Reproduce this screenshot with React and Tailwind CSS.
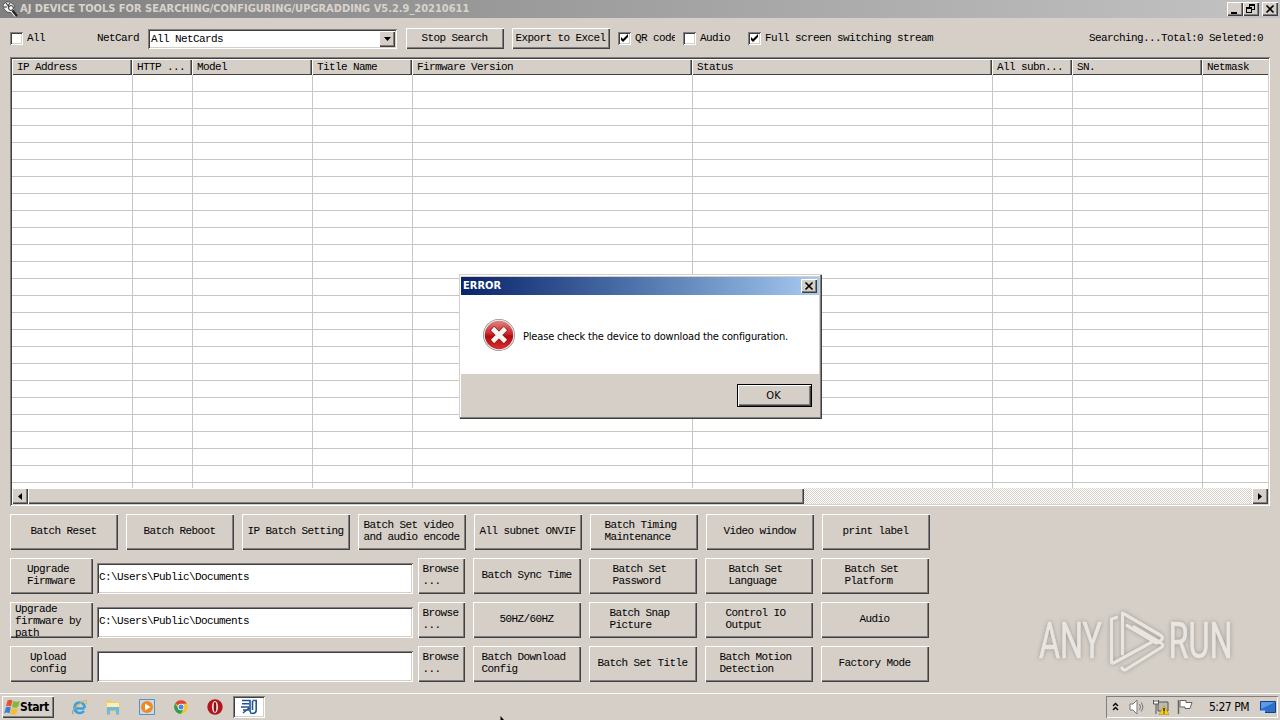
import React from "react";

const RAISED =
  "bg-[#d5cfc8] shadow-[inset_1px_1px_0_#ffffff,inset_-1px_-1px_0_#404040,inset_-2px_-2px_0_#808080]";
const SUNKEN =
  "bg-white shadow-[inset_1px_1px_0_#808080,inset_-1px_-1px_0_#ffffff,inset_2px_2px_0_#404040,inset_-2px_-2px_0_#d5cfc8]";
const MONO =
  "font-['Liberation_Mono',monospace] text-[11px] leading-[12px] tracking-[-0.6px] text-black";
const TAHOMA = "font-['DejaVu_Sans_Condensed','DejaVu_Sans',sans-serif]";

const COLUMNS = [
  { label: "IP Address", w: "w-[120px]" },
  { label: "HTTP ...", w: "w-[60px]" },
  { label: "Model", w: "w-[120px]" },
  { label: "Title Name", w: "w-[100px]" },
  { label: "Firmware Version", w: "w-[280px]" },
  { label: "Status", w: "w-[300px]" },
  { label: "All subn...", w: "w-[80px]" },
  { label: "SN.", w: "w-[130px]" },
  { label: "Netmask", w: "w-[120px]" },
];

const TOP_ACTIONS = [
  ["Batch Reset"],
  ["Batch Reboot"],
  ["IP Batch Setting"],
  ["Batch Set video ", "and audio encode"],
  ["All subnet ONVIF"],
  ["Batch Timing ", "Maintenance"],
  ["Video window"],
  ["print label"],
];

const PATH_ROWS = [
  {
    action: ["Upgrade ", "Firmware"],
    path: "C:\\Users\\Public\\Documents",
    buttons: [["Batch Sync Time"], ["Batch Set ", "Password"], ["Batch Set ", "Language"], ["Batch Set ", "Platform"]],
  },
  {
    action: ["Upgrade ", "firmware by ", "path"],
    path: "C:\\Users\\Public\\Documents",
    buttons: [["50HZ/60HZ"], ["Batch Snap ", "Picture"], ["Control IO ", "Output"], ["Audio"]],
  },
  {
    action: ["Upload ", "config"],
    path: "",
    buttons: [["Batch Download ", "Config"], ["Batch Set Title"], ["Batch Motion ", "Detection"], ["Factory Mode"]],
  },
];

function PushButton({ lines, className = "w-[108px] h-9", pad = "pb-[2px] pr-[1px]" }) {
  return (
    <button className={`${RAISED} ${MONO} ${className} flex shrink-0 justify-center overflow-hidden p-0`}>
      <span className={`flex h-full flex-col justify-center whitespace-pre text-left ${pad}`}>
        {lines.map((line) => (
          <span key={line} className="block h-3 shrink-0">
            {line}
          </span>
        ))}
      </span>
    </button>
  );
}

function CheckBox({ label, checked, className }) {
  return (
    <label className={`flex h-[13px] shrink-0 items-start gap-[4px] overflow-hidden ${className}`}>
      <span className={`flex size-[13px] shrink-0 ${SUNKEN}`}>
        {checked && (
          <svg viewBox="0 0 13 13" className="size-[13px]">
            <path d="M3 5v3l2 2 5-5V2L5 7Z" fill="#000" />
          </svg>
        )}
      </span>
      <span className={`${MONO} whitespace-pre`}>{label}</span>
    </label>
  );
}

function CaptionButton({ children, className = "w-4" }) {
  return (
    <button className={`${RAISED} flex h-[14px] shrink-0 items-center justify-center p-0 ${className}`}>
      <svg viewBox="0 0 16 14" className="h-[14px] w-4" fill="none" stroke="#000" shapeRendering="crispEdges">
        {children}
      </svg>
    </button>
  );
}

function TitleBar() {
  return (
    <header className="flex h-[18px] shrink-0 items-center bg-linear-to-r from-[#808080] to-[#c3c3c3] pl-[2px] pr-[2px]">
      <svg viewBox="0 0 16 16" className="mr-[2px] size-4">
        <path d="M1 4 4 1l4 0 4 3 1 4-3 4-5-1-3-3Z" fill="#f2f2ee" stroke="#444" strokeWidth=".8" />
        <path d="M4 2l3 4M8 2 6 5M2 6h3" stroke="#333" strokeWidth="1.1" />
        <circle cx="9" cy="7" r="2.4" fill="#fff" stroke="#222" />
        <path d="m10.500 9.500 4.500 5.500" stroke="#222" strokeWidth="2" />
        <path d="m9 10.500 4 5" stroke="#fff" />
      </svg>
      <h1 className={`${TAHOMA} flex-1 whitespace-pre text-[11px] font-bold leading-[18px] tracking-[-0.01px] text-[#d8d3cc]`}>
        AJ DEVICE TOOLS FOR SEARCHING/CONFIGURING/UPGRADDING V5.2.9_20210611
      </h1>
      <CaptionButton>
        <path d="M4 10.500h6" strokeWidth="2" />
      </CaptionButton>
      <CaptionButton>
        <path d="M6.500 3v3M11.500 3v5M9 7.500h3" strokeWidth="1" />
        <path d="M6 3h6M3 6h6" strokeWidth="2" />
        <path d="M3.500 6v5M8.500 6v5M3 10.500h6" />
      </CaptionButton>
      <CaptionButton className="ml-[3px] w-4">
        <path d="m4.500 3.500 7 7m0-7-7 7" strokeWidth="1.7" shapeRendering="auto" />
      </CaptionButton>
    </header>
  );
}

function Toolbar() {
  return (
    <div className="flex h-[39px] shrink-0 items-center pl-[10px] pt-[2px]">
      <CheckBox label="All" className="w-[87px]" />
      <span className={`${MONO} mb-px w-[51px]`}>NetCard</span>
      <div className={`${SUNKEN} flex h-[20px] w-[249px] items-center justify-between p-[2px]`}>
        <span className={`${MONO} pl-[1px] pt-[1px]`}>All NetCards</span>
        <span className={`${RAISED} flex h-4 w-4 items-center justify-center`}>
          <svg viewBox="0 0 7 4" className="h-1 w-[7px]">
            <path d="M0 0h7L3.500 4Z" />
          </svg>
        </span>
      </div>
      <PushButton lines={["Stop Search"]} className="ml-[9px] h-[21px] w-[98px]" pad="pb-[1px] pr-[1px]" />
      <PushButton lines={["Export to Excel"]} className="ml-2 mr-2 h-[21px] w-[98px]" pad="pb-[1px] pr-[1px]" />
      <CheckBox label="QR code" checked className="mr-2 w-[57px]" />
      <CheckBox label="Audio" className="w-[65px]" />
      <CheckBox label="Full screen switching stream" checked className="w-[200px]" />
      <span className={`${MONO} mb-px ml-auto mr-[17px] whitespace-pre`}>Searching...Total:0 Seleted:0</span>
    </div>
  );
}

function DeviceTable() {
  return (
    <section className={`${SUNKEN} mx-[10px] flex h-[449px] shrink-0 flex-col p-[2px]`}>
      <div className="flex h-4 w-[1256px] shrink-0 overflow-hidden">
        {COLUMNS.map((c) => (
          <div
            key={c.label}
            className={`${c.w} ${MONO} h-4 shrink-0 whitespace-pre bg-[#d5cfc8] pl-[5px] pt-[2px] shadow-[inset_1px_1px_0_#ffffff,inset_-1px_-1px_0_#404040,inset_-2px_0_0_#808080]`}
          >
            {c.label}
          </div>
        ))}
      </div>
      <div className="h-[413px] w-[1256px] shrink-0 overflow-hidden">
        {Array.from({ length: 25 }, (_, r) => (
          <div key={r} className="flex h-[17px] border-b border-[#c9c6c2]">
            {COLUMNS.map((c, i) => (
              <div
                key={c.label}
                className={`${c.w} shrink-0 ${i > 0 ? "border-l border-[#c9c6c2]" : ""}`}
              />
            ))}
          </div>
        ))}
      </div>
      <div className="flex h-4 shrink-0 bg-[repeating-conic-gradient(#ffffff_0_25%,#d5cfc8_0_50%)] bg-size-[2px_2px]">
        <span className={`${RAISED} flex w-4 items-center justify-center`}>
          <svg viewBox="0 0 4 7" className="mr-px h-[7px] w-1">
            <path d="M4 0v7L0 3.500Z" />
          </svg>
        </span>
        <span className={`${RAISED} w-[776px]`} />
        <span className={`${RAISED} ml-auto flex w-4 items-center justify-center`}>
          <svg viewBox="0 0 4 7" className="h-[7px] w-1">
            <path d="M0 0v7l4-3.500Z" />
          </svg>
        </span>
      </div>
    </section>
  );
}

function Actions() {
  return (
    <section className="flex flex-1 flex-col gap-2 pl-[10px] pt-2">
      <div className="flex gap-2">
        {TOP_ACTIONS.map((lines) => (
          <PushButton key={lines[0]} lines={lines} />
        ))}
      </div>
      {PATH_ROWS.map((row) => (
        <div key={row.action.join()} className="flex h-9">
          <PushButton
            lines={row.action}
            className="h-9 w-[83px]"
            pad={row.action.length > 2 ? "pt-[2px] pr-[1px]" : "pb-[2px] pr-[1px]"}
          />
          <div className={`${SUNKEN} ${MONO} ml-1 mr-[5px] mt-[5px] h-[31px] w-[316px] whitespace-pre pl-[2px] pt-[8px]`}>
            {row.path}
          </div>
          <PushButton lines={["Browse", "..."]} className="h-9 w-[47px]" pad="pb-[2px] pr-[2px]" />
          <div className="ml-2 flex gap-2">
            {row.buttons.map((lines) => (
              <PushButton key={lines.join()} lines={lines} />
            ))}
          </div>
        </div>
      ))}
    </section>
  );
}

function ErrorDialog() {
  return (
    <div className="absolute left-[459px] top-[274px] flex h-[145px] w-[363px] flex-col bg-[#d5cfc8] p-[3px] pl-[2px] shadow-[inset_1px_1px_0_#d5cfc8,inset_-1px_-1px_0_#404040,inset_-2px_-2px_0_#808080,inset_2px_2px_0_#ffffff]">
      <div className="flex h-[18px] shrink-0 items-center justify-between bg-linear-to-r from-[#0a246a] to-[#a6caf0] pl-[2px] pr-[2px]">
        <span className={`${TAHOMA} text-[11px] font-bold leading-[18px] text-white`}>ERROR</span>
        <CaptionButton>
          <path d="m4.500 3.500 7 7m0-7-7 7" strokeWidth="1.700" shapeRendering="auto" />
        </CaptionButton>
      </div>
      <div className="flex h-[79px] shrink-0 items-center bg-white pl-[21px]">
        <svg viewBox="0 0 34 34" className="size-[34px]">
          <defs>
            <linearGradient id="err" x1="0" y1="0" x2="0" y2="1">
              <stop offset="0" stopColor="#df8583" />
              <stop offset=".45" stopColor="#c9282d" />
              <stop offset=".55" stopColor="#b3090f" />
              <stop offset="1" stopColor="#d9302f" />
            </linearGradient>
          </defs>
          <circle cx="17" cy="17" r="16" fill="#8f8f8f" />
          <circle cx="17" cy="17" r="15.200" fill="#eee" />
          <circle cx="17" cy="17" r="14.200" fill="url(#err)" />
          <path d="m10 10 14 14M24 10 10 24" stroke="#8c1014" strokeWidth="6" />
          <path d="m10.500 10.500 13 13M23.500 10.500 10.500 23.500" stroke="#f4f4f0" strokeWidth="4.600" />
        </svg>
        <span className={`${TAHOMA} ml-[7px] mt-[4px] whitespace-pre text-[11px] leading-[14px] tracking-[-0.18px] text-black`}>
          Please check the device to download the configuration.
        </span>
      </div>
      <div className="flex flex-1 items-start justify-end pr-[7px] pt-[10px]">
        <button className="flex h-[23px] w-[75px] bg-black p-[1px]">
          <span className={`${RAISED} ${TAHOMA} flex-1 pr-[2px] text-center text-[11px] leading-[21px] text-black`}>OK</span>
        </button>
      </div>
    </div>
  );
}

function Watermark() {
  return (
    <svg
      viewBox="0 0 200 66"
      className="absolute left-[1036px] top-[608px] h-[66px] w-[200px] overflow-visible drop-shadow-[0_0_2px_rgba(130,125,120,0.7)]"
    >
      <g fill="#e9e6e2" stroke="#e9e6e2" strokeWidth=".7" fontFamily="Roboto, sans-serif" fontSize="50">
        <text x="3" y="50" textLength="63" lengthAdjust="spacingAndGlyphs">ANY</text>
        <text x="132.500" y="50" textLength="64" lengthAdjust="spacingAndGlyphs">RUN</text>
      </g>
      <g fill="none" stroke="#e9e6e2" strokeWidth="3.200" strokeLinejoin="round" strokeLinecap="round">
        <path d="M86.500 46V5L125 27.500q3 2.500 0 5l-4.500 2.500L91 17.500" />
        <path d="M80.500 9.500 75.500 11V54q0 2 3 .5L116 34" />
        <path d="M86 60q1 3 4 1.500L126 39q2-2-1-4L98 19" />
      </g>
    </svg>
  );
}

function Taskbar() {
  return (
    <footer className="flex h-[27px] shrink-0 items-center border-t border-white pl-[2px] pr-[2px]">
      <button className={`${RAISED} flex h-[22px] w-[52px] items-center p-0 pl-[2px]`}>
        <svg viewBox="0 0 16 16" className="size-4 shrink-0">
          <path d="M3.500 1.500Q6 0 8.500 1.500L7 7.500Q4.500 6 2 7.500Z" fill="#e5532a" />
          <path d="M9.300 2q3 1.500 6.500 0L14 8q-3 1.500-6 0Z" fill="#7fb83c" />
          <path d="M1.800 8.500q2.500-1.500 5 0L5.500 14.500Q3 12.500.2 14.500Z" fill="#3b7fd4" />
          <path d="M7.700 9q3 1.500 6 0L12.300 15q-3 1.500-6 0Z" fill="#f6bd2c" />
        </svg>
        <span className={`${TAHOMA} text-[12px] font-bold leading-[20px] tracking-[-0.4px] text-black`}>Start</span>
      </button>
      <div className="ml-[17px] flex items-center gap-[18px]">
        <svg viewBox="0 0 16 16" className="size-4">
          <path d="M13.500 9.500H5M13 12Q10.500 14.800 7 13.800 3.500 12.500 3.500 8.700 4 3.500 8.500 3.500q5 .3 5.300 5.500" fill="none" stroke="#3b9fe0" strokeWidth="2.600" />
          <path d="M2 15q-2-2 3-7t9-6.500q3-.5 1 4" fill="none" stroke="#d9b54a" strokeWidth="1.200" />
          <path d="M2 15q-2-2 3-7" fill="none" stroke="#58b2ea" />
        </svg>
        <svg viewBox="0 0 16 16" className="size-4">
          <path d="M1 1h5l1 2h8v10H1Z" fill="#e8cf76" />
          <path d="M2 4h12v4H2Z" fill="#faf0b8" />
          <path d="M2 15.500V9q0-1 1-1h10q1 0 1 1v6.500h-3v-4H5v4Z" fill="#6db8e4" />
        </svg>
        <svg viewBox="0 0 16 16" className="size-4">
          <path d="M.5.500h15v15H.5Z" fill="#c4dcf0" stroke="#5b8fc4" />
          <circle cx="8" cy="8" r="6" fill="#f08a1c" />
          <path d="M6 4.500v7l5.500-3.500Z" fill="#fff" />
        </svg>
        <svg viewBox="0 0 16 16" className="size-4">
          <circle cx="8" cy="8" r="6.800" fill="#f3c52f" />
          <path d="M8 8 2.100 4.600A6.800 6.800 0 0 1 13.900 4.600L8 5Z" fill="#dd4437" />
          <path d="M2.100 4.600A6.800 6.800 0 0 0 8 14.800L10.500 10 5 9Z" fill="#2f9e55" />
          <circle cx="8" cy="8" r="3.200" fill="#fff" />
          <circle cx="8" cy="8" r="2.500" fill="#4a85e8" />
        </svg>
        <svg viewBox="0 0 16 16" className="size-4">
          <circle cx="8" cy="8" r="7.700" fill="#b3151b" />
          <ellipse cx="8" cy="8" rx="3" ry="6" fill="#f0e6e4" />
          <ellipse cx="8" cy="8" rx="1.300" ry="5" fill="#8a0e12" />
        </svg>
      </div>
      <div className={`${SUNKEN} ml-[10px] flex h-[22px] w-8 items-center justify-center`}>
        <svg viewBox="0 0 18 16" className="h-4 w-[18px]" fill="none" stroke="#205493" strokeWidth="1.600">
          <path d="M2 1.500h8V12l1.500 3M2 4.800h7M1 8h8M3 11h6M3 14l6-5" />
          <path d="M12.500 1.500h3.700V11q0 3.500-4.200 3.500M12.500 2v9" />
        </svg>
      </div>
      <div className="ml-auto flex h-[22px] w-[172px] items-center pl-[6px] pr-[2px] shadow-[inset_1px_1px_0_#808080,inset_-1px_-1px_0_#ffffff]">
        <svg viewBox="0 0 7 9" className="mb-[2px] h-[9px] w-[7px]" fill="none" stroke="#000" strokeWidth="1.400">
          <path d="m1 4 2.500-2.500L6 4M1 8l2.500-2.500L6 8" />
        </svg>
        <svg viewBox="0 0 16 16" className="ml-[10px] size-4" fill="none" stroke="#777">
          <path d="M1 5h3l4-4v14l-4-4H1Z" fill="#fff" />
          <path d="M10.500 5q2 3 0 6M12.500 3.500q3 4.500 0 9" />
        </svg>
        <svg viewBox="0 0 16 16" className="ml-2 size-4">
          <path d="M5 3h10v9H5Z" fill="#b9bbb6" stroke="#55554f" />
          <path d="M.5 1v4h5V1M3 5v10M2 1v2M4 1v2" fill="#fff" stroke="#555" />
          <path d="M11 6.500 16 15.500H6Z" fill="#f5ce1f" stroke="#b99100" strokeWidth=".6" />
          <path d="M11 9v3.500M11 13.500v1" stroke="#000" strokeWidth="1.200" />
        </svg>
        <svg viewBox="0 0 16 16" className="ml-2 size-4">
          <path d="M1.500 1v14" stroke="#666" strokeWidth="1.500" />
          <path d="M3 1.500h6v2h6l-2 6H8V8H3Z" fill="#fff" stroke="#666" />
        </svg>
        <span className={`${TAHOMA} ml-4 whitespace-pre text-[12px] leading-[20px] tracking-[-0.5px] text-black`}>5:27 PM</span>
        <svg viewBox="0 0 16 12" className="ml-auto h-3 w-4">
          <path d="M.5.500h15v11H.5Z" fill="#2d6fc9" stroke="#1a3f80" />
          <path d="M1 1h14L1 8Z" fill="#5b9be8" />
          <path d="M0 9.500h5v2.500H0Z" fill="#b8dcf5" />
        </svg>
      </div>
    </footer>
  );
}

export default function App() {
  return (
    <div className="relative flex h-[720px] w-[1280px] flex-col overflow-hidden bg-[#d5cfc8]">
      <TitleBar />
      <Toolbar />
      <DeviceTable />
      <Actions />
      <Taskbar />
      <Watermark />
      <ErrorDialog />
      <svg viewBox="0 0 5 4" className="absolute left-[500px] top-[716px] h-1 w-[5px]">
        <path d="M.500 0v4h3.500Z" />
      </svg>
    </div>
  );
}
